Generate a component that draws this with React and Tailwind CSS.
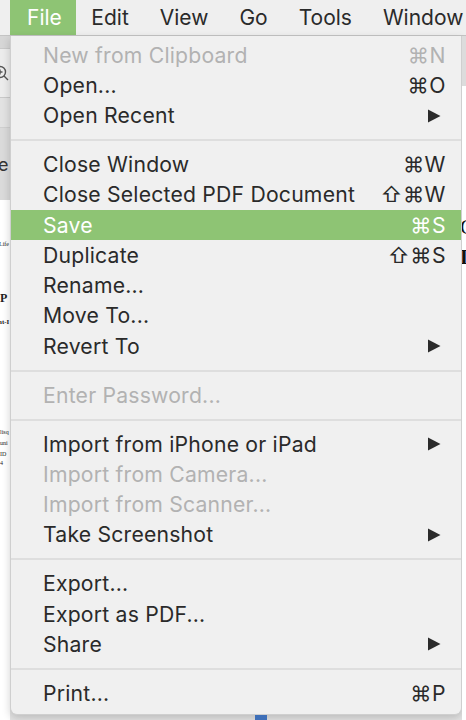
import React from 'react';

const font = { fontFamily: 'Inter, "DejaVu Sans", sans-serif' };

// menu rows; null = separator
const items = [
  { label: 'New from Clipboard', shortcut: '⌘N', disabled: true },
  { label: 'Open...', shortcut: '⌘O' },
  { label: 'Open Recent', submenu: true },
  null,
  { label: 'Close Window', shortcut: '⌘W' },
  { label: 'Close Selected PDF Document', shortcut: '⇧⌘W' },
  { label: 'Save', shortcut: '⌘S', active: true },
  { label: 'Duplicate', shortcut: '⇧⌘S' },
  { label: 'Rename...' },
  { label: 'Move To...' },
  { label: 'Revert To', submenu: true },
  null,
  { label: 'Enter Password...', disabled: true },
  null,
  { label: 'Import from iPhone or iPad', submenu: true },
  { label: 'Import from Camera...', disabled: true },
  { label: 'Import from Scanner...', disabled: true },
  { label: 'Take Screenshot', submenu: true },
  null,
  { label: 'Export...' },
  { label: 'Export as PDF...' },
  { label: 'Share', submenu: true },
  null,
  { label: 'Print...', shortcut: '⌘P' },
];

const menus = ['File', 'Edit', 'View', 'Go', 'Tools', 'Window'];

function Arrow() {
  return (
    <svg width="14" height="14" viewBox="0 0 14 14" className="mr-[5px]">
      <path d="M1 0.5 L13.5 7 L1 13.5 Z" fill="#2b2b2b" />
    </svg>
  );
}

function Row({ item }) {
  const color = item.active ? 'text-white' : item.disabled ? 'text-[#b2b2b2]' : 'text-[#2a2a2a]';
  return (
    <div className={`h-[30.25px] flex items-center justify-between pl-[32px] pr-[15px] text-[21.2px] leading-none ${color} ${item.active ? 'bg-[#8ec474]' : ''}`}>
      <span className="tracking-[0.2px]">{item.label}</span>
      {item.shortcut && <span className="tracking-[0.5px]">{item.shortcut}</span>}
      {item.submenu && <Arrow />}
    </div>
  );
}

function Separator() {
  return (
    <div className="h-[18.75px] flex items-center">
      <div className="w-full h-[2px] bg-[#dedede]" />
    </div>
  );
}

export default function App() {
  return (
    <div className="w-[466px] h-[720px] overflow-hidden bg-[#e4e4e4] flex flex-col" style={font}>
      {/* Menu bar */}
      <div className="h-[36px] shrink-0 flex items-stretch bg-[#efefef] border-b border-[#c4c4c4] pl-[10px]">
        {menus.map((m, i) => (
          <div
            key={m}
            className={`flex items-center text-[21px] ${i === 0 ? 'pl-[17px] pr-[14px] bg-[#8ec474] text-white' : 'px-[15.5px] text-[#2a2a2a]'}`}
          >
            {m}
          </div>
        ))}
      </div>

      <div className="flex-1 flex">
        {/* Window content peeking out on the left */}
        <div className="w-[10px] shrink-0 flex flex-col overflow-hidden">
          <div className="h-[12px] bg-[#d6d6d6]" />
          <div className="h-[50px] bg-[#ececec] border-y border-[#c9c9c9] flex items-center">
            <svg width="16" height="16" viewBox="0 0 16 16" className="-ml-[7px]">
              <circle cx="7" cy="7" r="5.5" fill="none" stroke="#555" strokeWidth="1.4" />
              <path d="M4.5 7 H9.5 M7 4.5 V9.5 M11 11 L15 15" stroke="#555" strokeWidth="1.4" />
            </svg>
          </div>
          <div className="h-[30px] bg-[#e2e2e2] border-b border-[#cfcfcf]" />
          <div className="h-[72px] bg-[#dadada] flex items-center">
            <span className="text-[18px] text-[#333] -ml-[2px]">e</span>
          </div>
          <div className="flex-1 bg-white flex flex-col pt-[40px] gap-[10px] text-[#222]" style={{ fontFamily: '"Liberation Serif", serif' }}>
            <span className="text-[6px] -ml-[1px]">Life</span>
            <span className="text-[12px] font-bold mt-[30px]">P</span>
            <span className="text-[7px] font-bold -ml-[2px]">nt-I</span>
            <span className="text-[6px] mt-[90px]">lisq</span>
            <span className="text-[6px] -mt-[8px]">uni</span>
            <span className="text-[6px] -mt-[8px]">ID 4</span>
          </div>
        </div>

        {/* Dropdown */}
        <div className="flex-1 flex flex-col">
          <div className="h-[679px] bg-[#f0f0f0] rounded-b-[7px] border-x border-b border-[#cfcfcf] shadow-[0_3px_8px_rgba(0,0,0,0.18)] pt-[4px]">
            {items.map((it, i) => (it ? <Row key={i} item={it} /> : <Separator key={i} />))}
          </div>
          <div className="flex-1 flex">
            <div className="w-[245px]" />
            <div className="w-[12px] bg-[#3e6fb8]" />
          </div>
        </div>

        {/* Window content peeking out on the right */}
        <div className="w-[4px] shrink-0 bg-white flex flex-col overflow-hidden text-[#111]" style={{ fontFamily: '"Liberation Serif", serif' }}>
          <div className="h-[50px] bg-[#dcdcdc]" />
          <span className="text-[22px] leading-none mt-[130px] -ml-[2px]">C</span>
          <span className="text-[22px] leading-none mt-[8px] -ml-[2px] font-bold">L</span>
        </div>
      </div>
    </div>
  );
}
